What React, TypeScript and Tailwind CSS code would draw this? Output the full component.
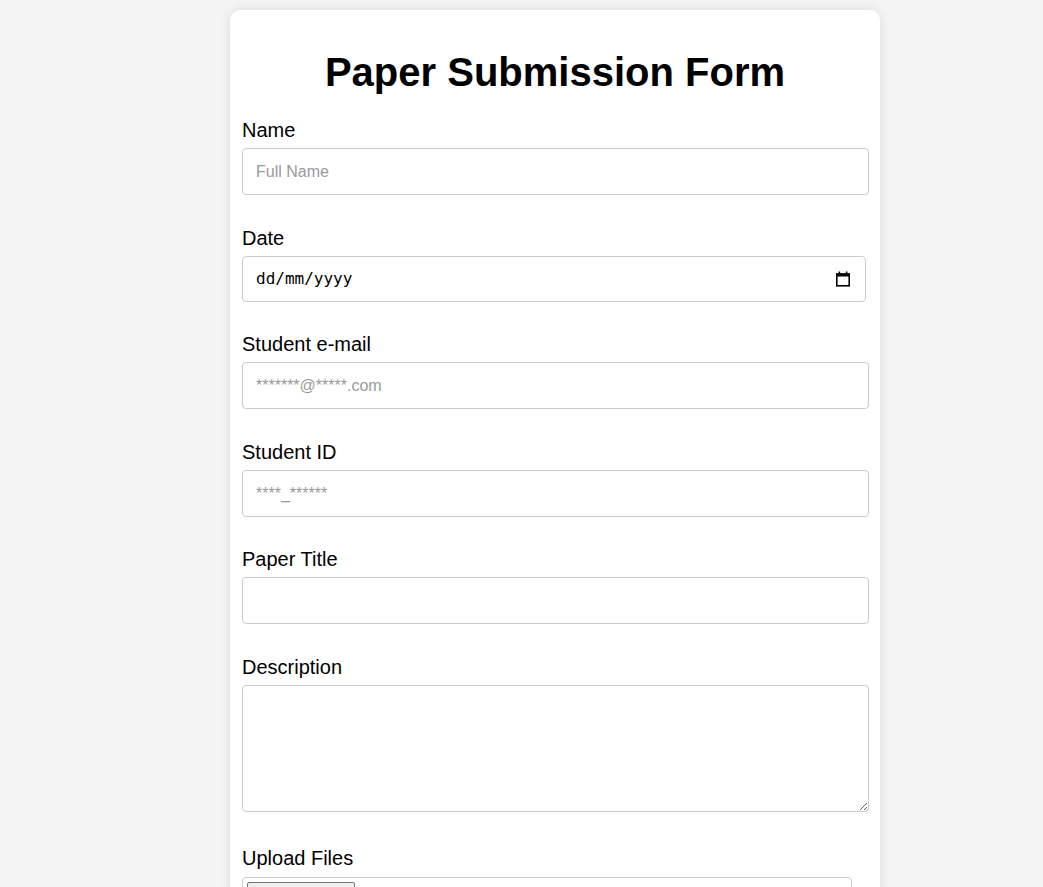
import React from "react";

const font = { fontFamily: '"Liberation Sans", Arial, sans-serif' };

function Label({ children }: { children: React.ReactNode }) {
  return (
    <label className="block text-[20px] leading-[23px] text-black mb-[6px]">
      {children}
    </label>
  );
}

const inputCls =
  "block w-[627px] h-[47px] border border-[#cccccc] rounded-[4px] px-[13px] pt-[1px] text-[16px] text-black placeholder:text-[#9a9a9a] outline-none bg-white";

export default function App() {
  return (
    <div className="min-h-[1400px] bg-[#f4f4f4] pt-[10px]" style={font}>
      <div className="ml-[230px] w-[650px] bg-white rounded-[10px] shadow-[0_0_12px_rgba(0,0,0,0.1)] px-[12px] pt-[39px] pb-[40px]">
        <h1 className="text-[40px] leading-[46px] font-bold text-center text-black mb-[24px]">
          Paper Submission Form
        </h1>

        <div className="mb-[32px]">
          <Label>Name</Label>
          <input className={inputCls} placeholder="Full Name" />
        </div>

        <div className="mb-[31px]">
          <Label>Date</Label>
          <div className="flex items-center justify-between w-[624px] h-[46px] border border-[#cccccc] rounded-[4px] pl-[13px] pr-[14px] bg-white">
            <span
              className="text-[16px] text-black"
              style={{ fontFamily: '"DejaVu Sans Mono", monospace' }}
            >
              dd/mm/yyyy
            </span>
            <svg width="16" height="16" viewBox="0 0 16 16">
              <rect x="1.8" y="3" width="12.4" height="11.8" fill="none" stroke="#000" strokeWidth="1.6" />
              <rect x="1" y="2.5" width="14" height="3" fill="#000" />
              <rect x="3.6" y="0.5" width="1.6" height="3" fill="#000" />
              <rect x="10.8" y="0.5" width="1.6" height="3" fill="#000" />
            </svg>
          </div>
        </div>

        <div className="mb-[32px]">
          <Label>Student e-mail</Label>
          <input className={inputCls} placeholder="*******@*****.com" />
        </div>

        <div className="mb-[31px]">
          <Label>Student ID</Label>
          <input className={inputCls} placeholder="****_******" />
        </div>

        <div className="mb-[32px]">
          <Label>Paper Title</Label>
          <input className={inputCls} />
        </div>

        <div className="mb-[35px]">
          <Label>Description</Label>
          <textarea className="block w-[627px] h-[127px] border border-[#cccccc] rounded-[4px] p-[12px] text-[16px] outline-none bg-white" />
        </div>

        <div className="mb-[32px]">
          <label className="block text-[20px] leading-[23px] text-black mb-[7px]">
            Upload Files
          </label>
          <div className="w-[610px] border border-[#cccccc] rounded-[4px] pt-[4px] pb-[4px] pl-[4px] flex items-center gap-[6px]">
            <span className="inline-block w-[108px] border border-[#767676] rounded-[2px] bg-[#efefef] py-[1px] text-center text-[16px] text-black">
              Choose Files
            </span>
            <span className="text-[16px] text-black">No file chosen</span>
          </div>
        </div>
      </div>
    </div>
  );
}
